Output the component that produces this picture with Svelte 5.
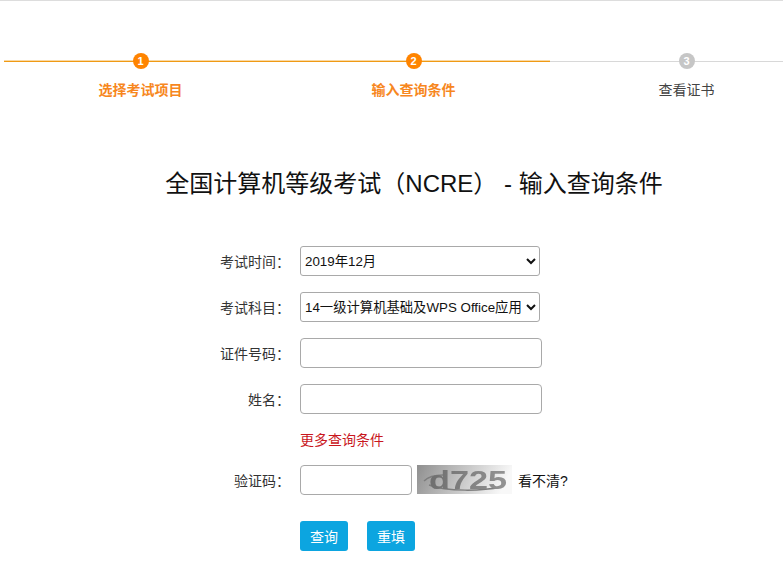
<script>
  const steps = [
    { n: 1, label: "选择考试项目", done: true },
    { n: 2, label: "输入查询条件", done: true },
    { n: 3, label: "查看证书", done: false },
  ];
  let date = $state("2019年12月");
  let subject = $state("14一级计算机基础及WPS Office应用");
</script>

<div class="page">
  <div class="stepper">
    {#each steps as step}
      <div class="step" class:done={step.done}>
        <div class="track"><span class="dot">{step.n}</span></div>
        <div class="step-label">{step.label}</div>
      </div>
    {/each}
  </div>

  <h1>全国计算机等级考试（NCRE） - 输入查询条件</h1>

  <form class="form" onsubmit={(e) => e.preventDefault()}>
    <div class="row first">
      <label for="date">考试时间：</label>
      <select id="date" bind:value={date}>
        <option>2019年12月</option>
        <option>2019年9月</option>
      </select>
    </div>
    <div class="row">
      <label for="subject">考试科目：</label>
      <select id="subject" bind:value={subject}>
        <option>14一级计算机基础及WPS Office应用</option>
      </select>
    </div>
    <div class="row">
      <label for="idno">证件号码：</label>
      <input id="idno" type="text" />
    </div>
    <div class="row">
      <label for="name">姓名：</label>
      <input id="name" type="text" />
    </div>
    <div class="more"><a href="#more">更多查询条件</a></div>
    <div class="row captcha-row">
      <label for="code">验证码：</label>
      <input id="code" class="code" type="text" />
      <svg class="captcha" width="95" height="29" viewBox="0 0 95 29">
        <defs>
          <linearGradient id="cap-bg" x1="0" y1="0" x2="1" y2="0.15">
            <stop offset="0" stop-color="#8f8f8f" />
            <stop offset="0.55" stop-color="#c9c9c9" />
            <stop offset="1" stop-color="#f8f8f8" />
          </linearGradient>
          <linearGradient id="cap-fg" x1="0" y1="0" x2="1" y2="0">
            <stop offset="0" stop-color="#6e6e6e" />
            <stop offset="1" stop-color="#949494" />
          </linearGradient>
          <filter id="cap-blur"><feGaussianBlur stdDeviation="0.5" /></filter>
        </defs>
        <rect width="95" height="29" fill="url(#cap-bg)" />
        <g filter="url(#cap-blur)">
          <path d="M7 16C12 11 18 10 26 10M12 20C30 27 66 26 84 22" fill="none" stroke="#7d7d7d" stroke-width="1.5" />
          <text x="12" y="23.5" font-family="Liberation Sans, sans-serif" font-weight="bold" font-size="25" fill="url(#cap-fg)" textLength="78" lengthAdjust="spacingAndGlyphs">d725</text>
        </g>
      </svg>
      <a class="refresh" href="#refresh">看不清?</a>
    </div>
    <div class="actions">
      <button type="submit">查询</button>
      <button type="reset">重填</button>
    </div>
  </form>
</div>

<style>
  :global(body) {
    margin: 0;
    background: #fff;
    overflow: hidden;
  }
  .page {
    height: 566px;
    border-top: 1px solid #ddd;
    overflow: hidden;
    font-family: "Liberation Sans", "Noto Sans CJK SC", sans-serif;
    font-size: 14px;
    color: #333;
  }
  .stepper {
    display: grid;
    grid-template-columns: repeat(3, 273px);
    width: 819px;
    margin: 52px 0 0 4px;
  }
  .step {
    text-align: center;
  }
  .track {
    position: relative;
    display: flex;
    justify-content: center;
    height: 16px;
  }
  .track::before {
    content: "";
    position: absolute;
    left: 0;
    right: 0;
    top: 8px;
    height: 1px;
    background: #d8d8d8;
  }
  .done .track::before {
    top: 7px;
    border-top: 1px solid #f8d9a6;
    background: #f09a14;
  }
  .dot {
    position: relative;
    width: 16px;
    height: 16px;
    border-radius: 50%;
    background: #c6c6c6;
    color: #fff;
    font-size: 11px;
    font-weight: bold;
    line-height: 16px;
  }
  .done .dot {
    background: #ff8400;
  }
  .step-label {
    margin-top: 11px;
    line-height: 20px;
    color: #444;
  }
  .done .step-label {
    color: #f7871e;
    font-weight: bold;
  }
  h1 {
    margin: 66px 0 0;
    padding-left: 45px;
    font-size: 24px;
    font-weight: normal;
    line-height: 36px;
    text-align: center;
    color: #111;
  }
  .form {
    margin-top: 44px;
  }
  .row {
    display: flex;
    align-items: center;
    height: 30px;
    margin-top: 16px;
  }
  .row.first {
    margin-top: 0;
  }
  label {
    width: 290px;
    flex: none;
    margin-right: 10px;
    text-align: right;
    color: #333;
  }
  select {
    width: 240px;
    height: 30px;
    box-sizing: border-box;
    padding: 0;
    border: 1px solid #a9a9a9;
    border-radius: 3px;
    background: #fff;
    font: inherit;
    font-size: 13.33px;
    color: #111;
  }
  input {
    width: 242px;
    height: 30px;
    box-sizing: border-box;
    border: 1px solid #a9a9a9;
    border-radius: 4px;
    background: #fff;
  }
  .more {
    margin: 16px 0 0 300px;
    line-height: 20px;
  }
  .more a {
    color: #c9171e;
    text-decoration: none;
  }
  .captcha-row {
    margin-top: 15px;
  }
  input.code {
    width: 112px;
  }
  .captcha {
    flex: none;
    margin: 0 6px 1px 5px;
  }
  .refresh {
    color: #111;
    text-decoration: none;
  }
  .actions {
    display: flex;
    gap: 19px;
    margin: 26px 0 0 300px;
  }
  button {
    width: 48px;
    height: 30px;
    padding: 0;
    border: 0;
    border-radius: 3px;
    background: #0ca5e0;
    color: #fff;
    font: inherit;
    font-size: 14px;
  }
</style>
